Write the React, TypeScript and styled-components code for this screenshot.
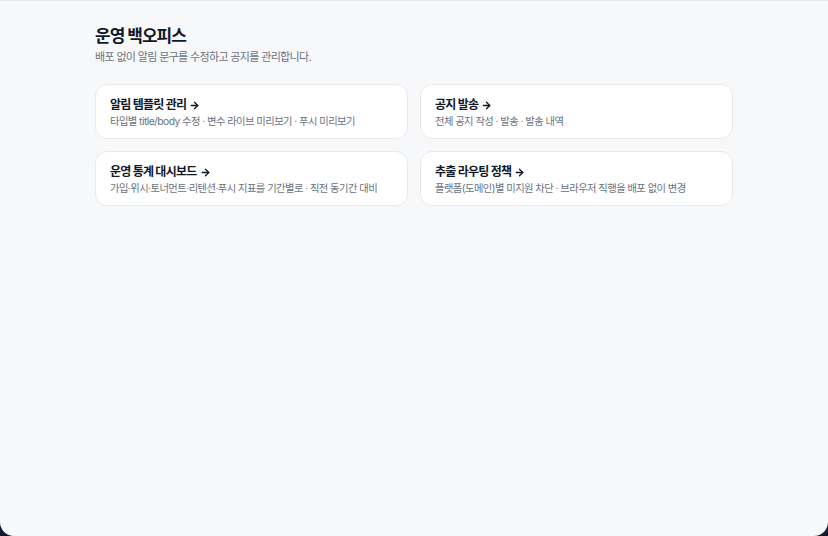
import React from 'react';
import styled, { createGlobalStyle } from 'styled-components';
import { ArrowRight } from 'lucide-react';

type CardItem = {
    title: string
    desc: string
}

const items: CardItem[] = [
    { title: '알림 템플릿 관리', desc: '타입별 title/body 수정 · 변수 라이브 미리보기 · 푸시 미리보기' },
    { title: '공지 발송', desc: '전체 공지 작성 · 발송 · 발송 내역' },
    { title: '운영 통계 대시보드', desc: '가입·위시·토너먼트·리텐션·푸시 지표를 기간별로 · 직전 동기간 대비' },
    { title: '추출 라우팅 정책', desc: '플랫폼(도메인)별 미지원 차단 · 브라우저 직행을 배포 없이 변경' },
];

const GlobalStyle = createGlobalStyle`
  html, body {
    margin: 0;
    padding: 0;
    background: #141a2e;
  }
  * {
    box-sizing: border-box;
  }
`

export default function App() {
    return (
        <>
            <GlobalStyle/>
            <Page>
                <Container>
                    <Title>운영 백오피스</Title>
                    <Subtitle>배포 없이 알림 문구를 수정하고 공지를 관리합니다.</Subtitle>
                    <Grid>
                        {items.map(item => (
                            <Card key={item.title}>
                                <CardTitle>
                                    {item.title}
                                    <ArrowRight size={11} strokeWidth={3}/>
                                </CardTitle>
                                <CardDesc>{item.desc}</CardDesc>
                            </Card>
                        ))}
                    </Grid>
                </Container>
            </Page>
        </>
    );
}

const Page = styled.div`
  min-height: 536px;
  background: #f7f8fa;
  border-top: 1px solid #e6e8ec;
  border-radius: 0 0 14px 14px;
  font-family: Inter, "Noto Sans CJK KR", sans-serif;
  color: #111827;
`
const Container = styled.div`
  max-width: 638px;
  margin: 0 auto;
  padding-top: 23px;
`
const Title = styled.h1`
  margin: 0;
  font-size: 17px;
  line-height: 24px;
  font-weight: 700;
  letter-spacing: -1px;
`
const Subtitle = styled.p`
  margin: 1px 0 0;
  font-size: 11px;
  line-height: 16px;
  letter-spacing: -0.65px;
  color: #6b7280;
`
const Grid = styled.div`
  display: grid;
  grid-template-columns: 1fr 1fr;
  gap: 12px;
  margin-top: 19px;
`
const Card = styled.div`
  background: #ffffff;
  border: 1px solid #e7e9ed;
  border-radius: 12px;
  padding: 12px 14px 10px;
  height: 55px;
`
const CardTitle = styled.div`
  display: flex;
  align-items: center;
  gap: 3px;
  font-size: 12px;
  line-height: 16px;
  font-weight: 700;
  letter-spacing: -0.75px;
  color: #111827;
`
const CardDesc = styled.div`
  margin-top: 1px;
  font-size: 10.3px;
  line-height: 15px;
  letter-spacing: -0.55px;
  color: #6b7280;
`
